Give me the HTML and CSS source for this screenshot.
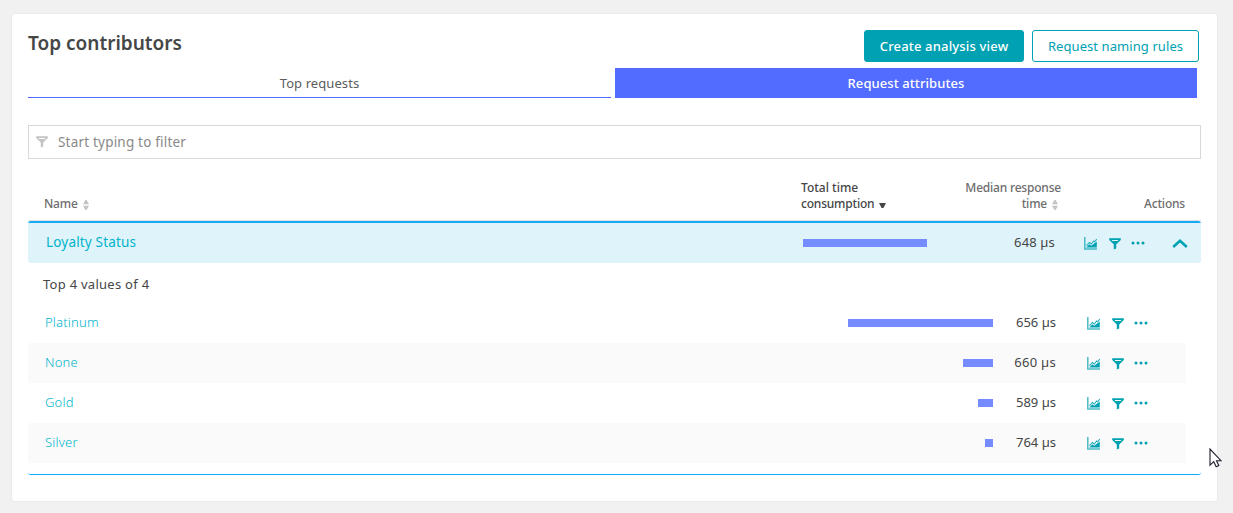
FILE: index.html
```html
<!DOCTYPE html>
<html lang="en">
<head>
<meta charset="utf-8">
<title>Top contributors</title>
<link rel="stylesheet" href="styles.css">
</head>
<body>
<svg class="defs" width="0" height="0">
  <symbol id="chart" viewBox="0 0 13 13">
    <path d="M.8 0V12H13" fill="none" stroke="currentColor" stroke-opacity=".7" stroke-width="1.5"/>
    <path d="M2.2 10.5L5.4 7.2L7.2 8.8L12.8 4.4V10.5Z" fill="currentColor"/>
    <path d="M2.4 8.6L5.5 5.4L7.3 7L9.6 4L10.6 4.8L12.8 2.2" fill="none" stroke="currentColor" stroke-opacity=".85" stroke-width="1.1"/>
  </symbol>
  <symbol id="funnel" viewBox="0 0 12 12">
    <path fill-rule="evenodd" d="M.2 .3H11.8V2L7.2 6.4V10.4L4.8 11.6V6.4L.2 2ZM2.4 1.9L3.5 3.1H8.5L9.6 1.9Z" fill="currentColor"/>
  </symbol>
  <symbol id="dots" viewBox="0 0 14 4">
    <circle cx="2" cy="2" r="1.5" fill="currentColor"/><circle cx="7" cy="2" r="1.5" fill="currentColor"/><circle cx="12" cy="2" r="1.5" fill="currentColor"/>
  </symbol>
  <symbol id="sort" viewBox="0 0 6 10">
    <path d="M0 4.2L2.4 0H3.6L6 4.2ZM0 5.8H6L3.6 10H2.4Z" fill="currentColor"/>
  </symbol>
</svg>
<main class="card">
  <header class="head">
    <h1 class="title">Top contributors</h1>
    <button class="btn primary">Create analysis view</button>
    <button class="btn outline">Request naming rules</button>
  </header>
  <nav class="tabs">
    <a class="tab">Top requests</a>
    <a class="tab active">Request attributes</a>
  </nav>
  <div class="filter"><svg class="funnel"><use href="#funnel"/></svg><span class="placeholder">Start typing to filter</span></div>
  <section class="table">
    <div class="thead">
      <div class="c-name">Name<svg class="sort"><use href="#sort"/></svg></div>
      <div class="c-total"><span class="line">Total time</span><br>consumption<svg class="down" viewBox="0 0 7 5"><path d="M0 0H7L4.4 5H2.6Z" fill="currentColor"/></svg></div>
      <div class="c-median">Median response<br>time<svg class="sort"><use href="#sort"/></svg></div>
      <div class="c-actions">Actions</div>
    </div>
    <div class="group">
      <div class="row main">
        <a class="link">Loyalty Status</a>
        <span class="track"><i class="bar" style="width:124px"></i></span>
        <span class="val">648 µs</span>
        <span class="icons"><svg class="chart"><use href="#chart"/></svg><svg class="funnel"><use href="#funnel"/></svg><svg class="dots"><use href="#dots"/></svg><svg class="chevron" viewBox="0 0 16 9"><path d="M1.2 8L8 1.8L14.8 8" fill="none" stroke="currentColor" stroke-width="2.6"/></svg></span>
      </div>
      <div class="sub">Top 4 values of 4</div>
      <div class="row child"><a class="link">Platinum</a><span class="track"><i class="bar" style="width:145px"></i></span><span class="val">656 µs</span><span class="icons"><svg class="chart"><use href="#chart"/></svg><svg class="funnel"><use href="#funnel"/></svg><svg class="dots"><use href="#dots"/></svg></span></div>
      <div class="row child alt"><a class="link">None</a><span class="track"><i class="bar" style="width:30px"></i></span><span class="val wide">660 µs</span><span class="icons"><svg class="chart"><use href="#chart"/></svg><svg class="funnel"><use href="#funnel"/></svg><svg class="dots"><use href="#dots"/></svg></span></div>
      <div class="row child"><a class="link">Gold</a><span class="track"><i class="bar" style="width:15px"></i></span><span class="val">589 µs</span><span class="icons"><svg class="chart"><use href="#chart"/></svg><svg class="funnel"><use href="#funnel"/></svg><svg class="dots"><use href="#dots"/></svg></span></div>
      <div class="row child alt"><a class="link">Silver</a><span class="track"><i class="bar" style="width:8px"></i></span><span class="val">764 µs</span><span class="icons"><svg class="chart"><use href="#chart"/></svg><svg class="funnel"><use href="#funnel"/></svg><svg class="dots"><use href="#dots"/></svg></span></div>
    </div>
  </section>
</main>
<svg class="cursor" viewBox="0 0 13 20"><path d="M1 1V17.2L4.7 13.7L7.2 18.8L9.8 17.6L7.5 12.7H12Z" fill="#fff" stroke="#1b1b2b" stroke-width="1.1"/></svg>
</body>
</html>
```
FILE: styles.css
```css
* { box-sizing: border-box; }
body { margin: 0; height: 513px; padding: 14px 16px 12px 12px; background: #f1f1f1; overflow: hidden; font: 13px/20px "Noto Sans", "Open Sans", sans-serif; color: #454646; }
svg { display: block; flex: none; }
.defs { position: absolute; }
.card { width: 1205px; height: 487px; padding: 16px; background: #fff; border-radius: 3px; box-shadow: 0 0 2px #dcdcdc; }
.head { display: flex; height: 32px; padding-right: 2px; gap: 8px; }
.title { flex: 1; margin: 0; font-size: 19px; font-weight: 600; line-height: 26px; }
.btn { height: 32px; padding: 0; border: 1px solid #00a1b2; border-radius: 3px; font: inherit; line-height: 30px; display: flex; justify-content: center; }
.primary { width: 160px; background: #00a1b2; color: #fff; font-weight: 500; letter-spacing: .17px; }
.outline { width: 167px; background: #fff; color: #00a1b2; letter-spacing: .08px; }
.tabs { display: grid; grid-template-columns: 583px 582px; grid-template-rows: 30px; gap: 4px; margin-top: 6px; height: 30px; }
.tab { height: 30px; text-align: center; line-height: 30px; border-bottom: 1px solid #526cff; color: #5c5d5d; letter-spacing: .08px; }
.active { background: #526cff; color: #fff; font-weight: 500; }
.filter { display: flex; align-items: center; height: 34px; margin-top: 27px; padding-left: 7px; border: 1px solid #d9d9d9; color: #898989; gap: 10px; }
.filter .funnel { color: #c4c4c4; }
.placeholder { font-size: 13.5px; letter-spacing: .2px; }
.thead { display: flex; align-items: flex-end; height: 62px; padding: 0 16px 8px; border-bottom: 1px solid #e1e1e1; font-size: 12px; line-height: 16px; font-weight: 500; letter-spacing: -.2px; color: #6d6d6d; }
.thead svg { display: inline-block; }
.sort { width: 6px; height: 10px; margin-left: 5px; color: #c4c4c4; vertical-align: -2px; }
.down { width: 7px; height: 5px; margin-left: 5px; vertical-align: 0; }
.c-name { width: 757px; }
.c-total { width: 130px; color: #454646; }
.line { letter-spacing: 0; }
.c-median { width: 130px; text-align: right; }
.c-median .sort { margin-right: 3px; }
.c-actions { flex: 1; text-align: right; }
.group { height: 254px; border-top: 2px solid #14a8f5; border-bottom: 1px solid #14a8f5; border-radius: 3px; }
.row { display: flex; align-items: center; height: 40px; padding-left: 17px; }
.main { padding-left: 18px; background: #dff3fa; border-radius: 0 0 3px 3px; }
.link { flex: 1; padding-bottom: 2px; color: #00b4cc; }
.main .link { font-size: 13.5px; letter-spacing: .18px; }
.child .link { font-weight: 300; letter-spacing: .2px; }
.child { width: 1158px; }
.alt { background: #fafafa; }
.track { width: 145px; display: flex; justify-content: flex-end; }
.main .track { width: 190px; justify-content: flex-start; }
.bar { display: block; height: 8px; background: #748cff; }
.val { width: 63px; padding-bottom: 2px; text-align: right; }
.val.wide { letter-spacing: .3px; }
.main .val { width: 62px; letter-spacing: .15px; }
.icons { width: 130px; padding: 1px 0 0 31px; display: flex; align-items: center; color: #00a1b2; }
.main .icons { width: 146px; padding-left: 28px; }
.main .chart { margin-left: 1px; }
.chart { width: 13px; height: 13px; }
.funnel { width: 12px; height: 12px; }
.icons .funnel { margin: 0 8px 0 12px; }
.main .icons .funnel { margin-left: 11.5px; margin-right: 8.5px; }
.dots { width: 14px; height: 4px; margin: 0 0 1px 2px; }
.chevron { width: 16px; height: 9px; margin: 0 0 1px 27px; }
.sub { height: 40px; padding: 11px 15px; letter-spacing: .27px; }
.cursor { position: absolute; left: 1209px; top: 448px; width: 13px; height: 20px; }
```
